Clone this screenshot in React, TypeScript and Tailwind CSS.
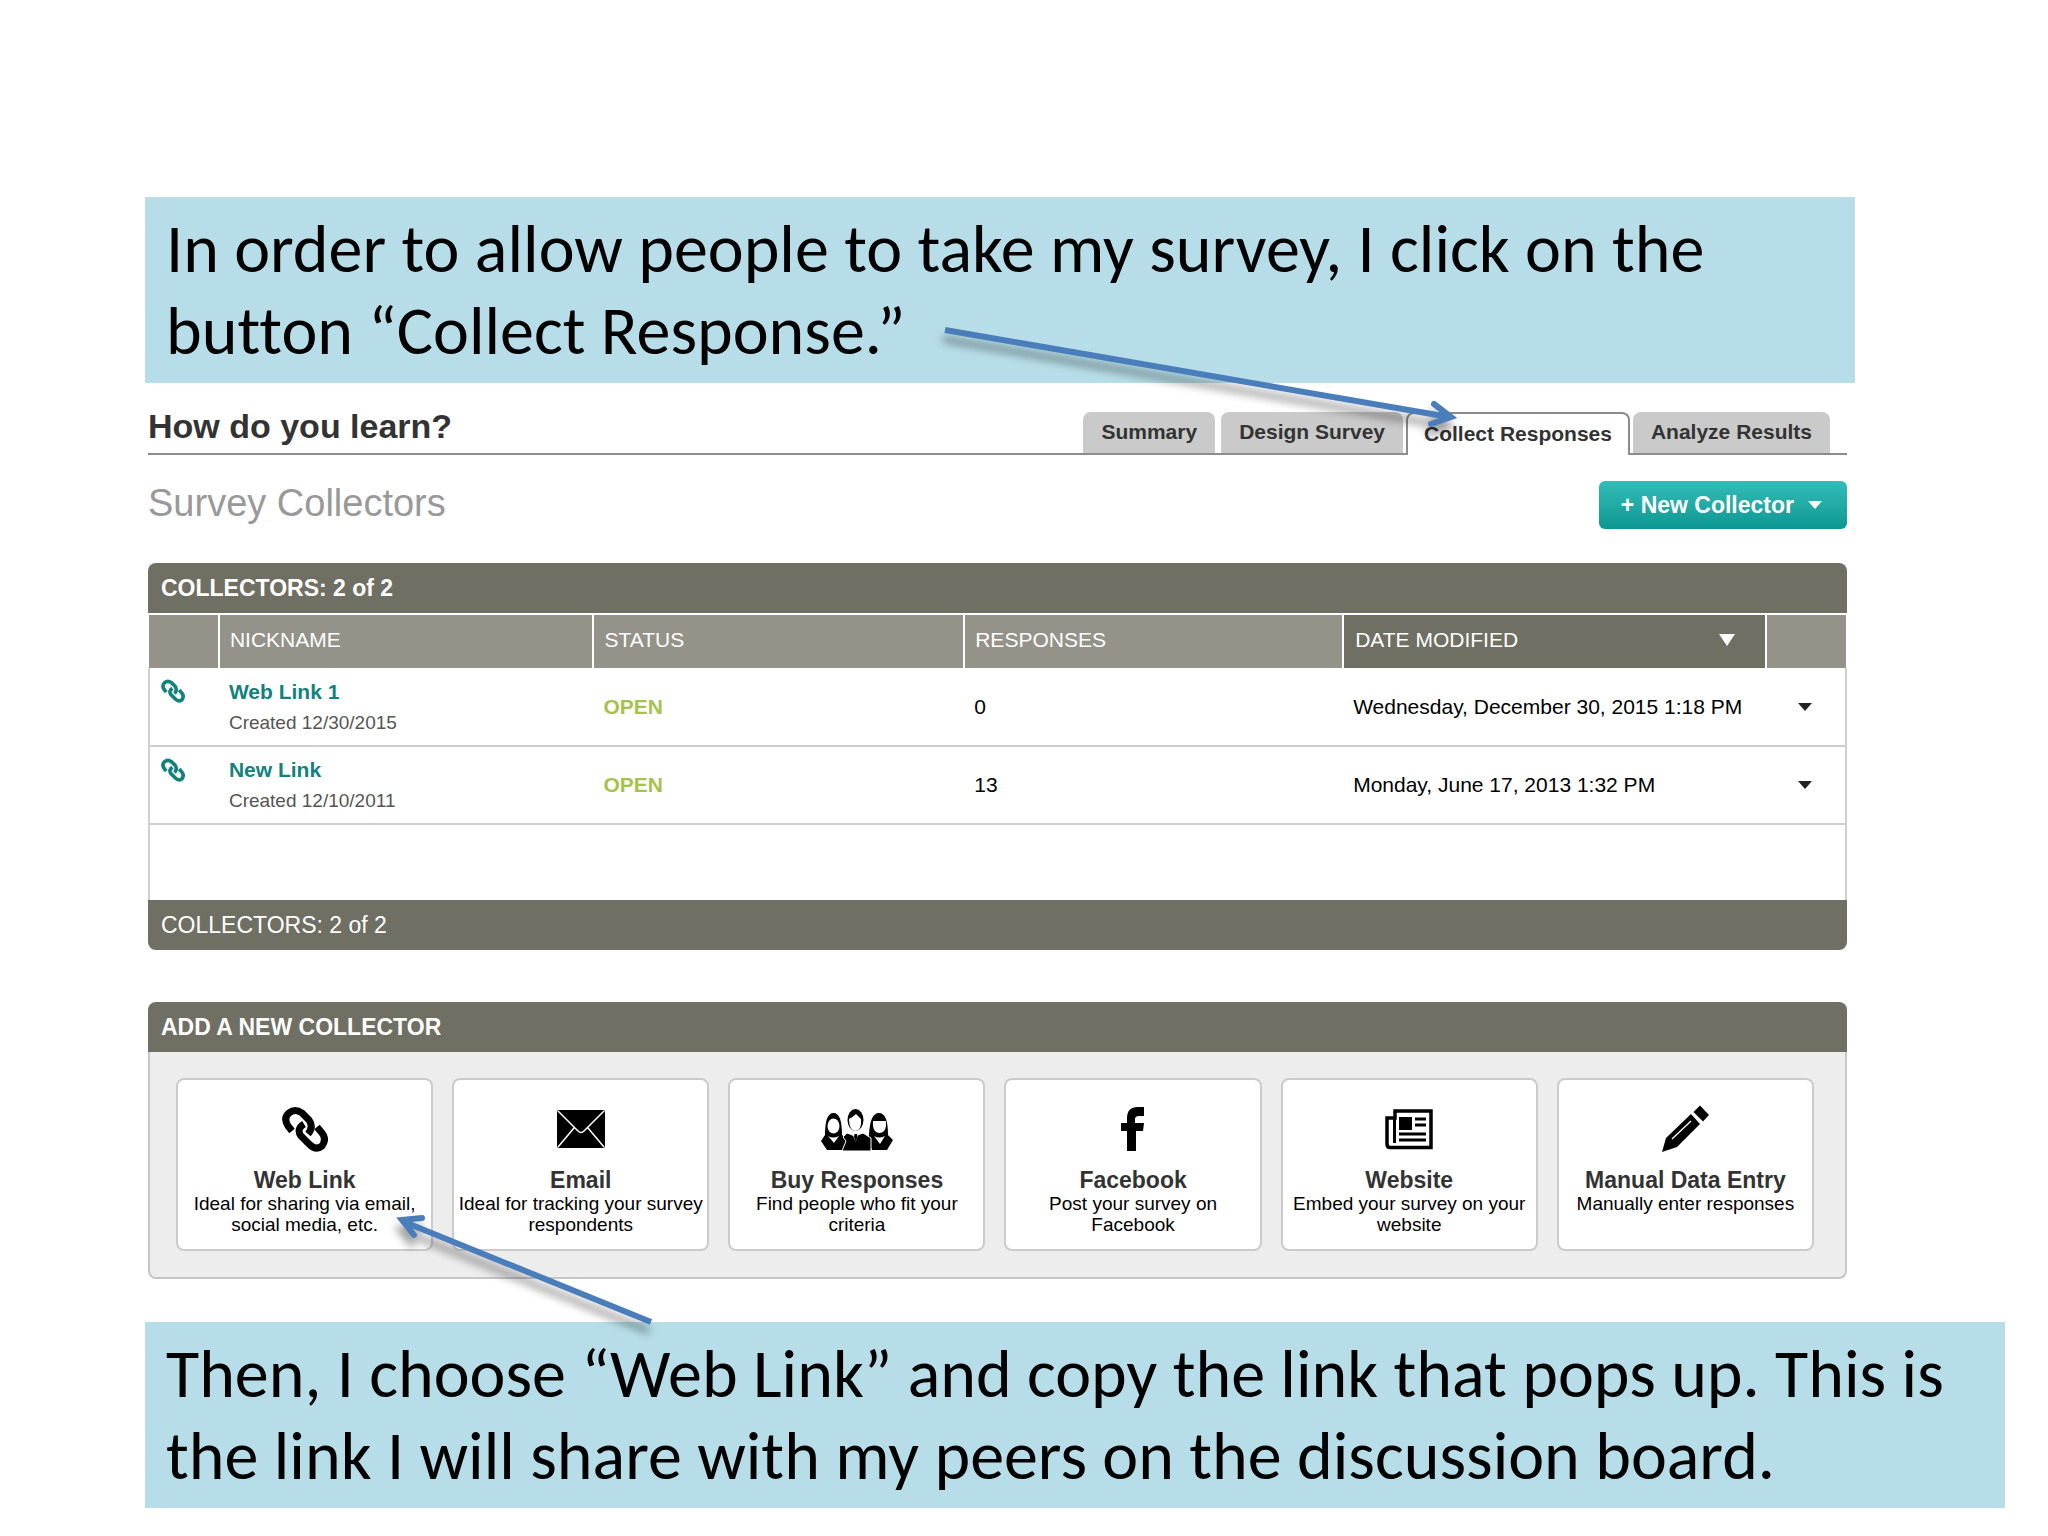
import type { ReactNode } from 'react'

const tabs = [
  { label: 'Summary', active: false },
  { label: 'Design Survey', active: false },
  { label: 'Collect Responses', active: true },
  { label: 'Analyze Results', active: false },
]

const collectors = [
  {
    name: 'Web Link 1',
    created: 'Created 12/30/2015',
    status: 'OPEN',
    responses: 0,
    modified: 'Wednesday, December 30, 2015 1:18 PM',
  },
  {
    name: 'New Link',
    created: 'Created 12/10/2011',
    status: 'OPEN',
    responses: 13,
    modified: 'Monday, June 17, 2013 1:32 PM',
  },
]

function LinkIcon({ className }: { className: string }) {
  return (
    <svg viewBox="11 10 46 46" className={className} fill="none" stroke="currentColor" strokeWidth="7">
      <path d="M21 35 L17 30 Q12 22 18 17 Q24 12 31 17 L38 24 Q43 31 37 38" />
      <path d="M33 28 Q25 33 30 40 L38 48 Q45 55 51 50 Q56 43 51 37 L46 31" />
    </svg>
  )
}

function EmailIcon() {
  return (
    <svg viewBox="0 0 48 38" className="w-12 h-[38px]">
      <rect width="48" height="38" rx="2" />
      <path
        d="M1 1 L21 21 Q24 24 27 21 L47 1 M1 37 L17 18 M47 37 L31 18"
        fill="none"
        stroke="#fff"
        strokeWidth="1.5"
      />
    </svg>
  )
}

function PeopleIcon() {
  return (
    <svg viewBox="6 10 72 41" className="w-[72px] h-[45px]">
      {/* left woman */}
      <path d="M10 36 Q10 14 18.500 14 Q27 14 27 36 L33 41 L29 51 L12 51 L6 42 Z" />
      <ellipse cx="18.500" cy="27" rx="6" ry="7.500" fill="#fff" />
      <path d="M13 37 Q18 40 24 37 L19 44 Z" fill="#fff" />
      {/* right woman */}
      <path d="M54 36 Q55 14 64 14 Q73 14 73 36 L78 41 L72 51 L57 51 L53 42 Z" />
      <path d="M58 22 H71 V27 Q70 34 64.500 34 Q59 34 58 27 Z" fill="#fff" />
      <path d="M59 37 Q64 40 70 37 L65 45 Z" fill="#fff" />
      {/* man */}
      <path d="M32 34 L40 37 L48 34 L56 39 V52 H27 L31 42 L28 38 Z" stroke="#fff" />
      <ellipse cx="40.500" cy="21" rx="8" ry="11" />
      <path d="M34 20 Q38 18 41 15 L46 20 Q47 31 40.500 32 Q34 31 34 20 Z" fill="#fff" />
      <path d="M37 34 L40.500 43 L44 34 L41 35 Z" fill="#fff" />
      <path d="M39.500 35 H42 L42.500 38 L40.500 43 L39 38 Z" />
    </svg>
  )
}

function FacebookIcon() {
  return (
    <svg viewBox="0 0 24 44" className="w-6 h-11">
      <path d="M23 0 V9 H18 Q14 9 14 12 V16 H23 L22 24 H15 V44 H6 V24 H0 V16 H6 V11 Q6 0 17 0 Z" />
    </svg>
  )
}

function NewsIcon() {
  return (
    <svg viewBox="15 12 48 41" className="w-12 h-[41px]" fill="none" stroke="currentColor">
      <path d="M25 14 H61 V50.500 H20 Q17 50.500 17 47 V21 H25 Z" strokeWidth="3.500" />
      <path d="M24.500 20 V46" strokeWidth="3" />
      <rect x="29" y="20" width="13" height="13" fill="currentColor" stroke="none" />
      <path d="M45 22 H56 M45 28 H56 M29 37 H56 M29 43 H56" strokeWidth="3" />
    </svg>
  )
}

function PencilIcon() {
  return (
    <svg viewBox="11 10 48 48" className="w-12 h-12">
      <path d="M41 19 L50 29 L27 52 L12 57 L16 43 Z" />
      <path d="M43.500 17 L50 10.500 L59 20 L53 26.500 Z" />
      <path d="M22 44 L41 26" stroke="#fff" strokeWidth="1.300" />
    </svg>
  )
}

const options: { title: string; text: string; icon: ReactNode }[] = [
  {
    title: 'Web Link',
    text: 'Ideal for sharing via email, social media, etc.',
    icon: <LinkIcon className="w-[46px] h-[50px]" />,
  },
  { title: 'Email', text: 'Ideal for tracking your survey respondents', icon: <EmailIcon /> },
  { title: 'Buy Responses', text: 'Find people who fit your criteria', icon: <PeopleIcon /> },
  { title: 'Facebook', text: 'Post your survey on Facebook', icon: <FacebookIcon /> },
  { title: 'Website', text: 'Embed your survey on your website', icon: <NewsIcon /> },
  { title: 'Manual Data Entry', text: 'Manually enter responses', icon: <PencilIcon /> },
]

function Note({ className, children }: { className: string; children: ReactNode }) {
  return (
    <p
      className={`${className} bg-[#b7dee8] px-[21px] py-[11px] font-[Carlito,Calibri,Lato,sans-serif] text-[68px] leading-[82px] text-black [font-variant-ligatures:none]`}
    >
      {children}
    </p>
  )
}

/* Callout arrows drawn over the page */
function Arrows() {
  return (
    <svg
      className="absolute left-0 top-0 w-[2048px] h-[1536px] pointer-events-none drop-shadow-[-2px_9px_4px_rgba(0,0,0,0.4)]"
      viewBox="0 0 2048 1536"
      fill="none"
      stroke="#4a7ebb"
      strokeWidth="6"
    >
      <path d="M945 330 L1449 417" />
      <path d="M1434 404 L1451 417 L1431 424" strokeLinecap="round" />
      <path d="M651 1322 L402 1221" />
      <path d="M422 1218 L402 1220 L414 1235" strokeLinecap="round" />
    </svg>
  )
}

export default function App() {
  return (
    <div className="relative min-h-screen overflow-hidden bg-white pt-[197px] pb-7 font-['Liberation_Sans',Arial,sans-serif] text-[#333]">
      <Note className="ml-[145px] mr-[193px]">
        In order to allow people to take my survey, I click on the
        <br />
        button “Collect Response.”
      </Note>

      <main className="ml-[148px] mr-[201px]">
        <header className="mt-[29px] flex items-end justify-between">
          <div className="flex h-[43px] flex-1 items-start border-b-2 border-[#8c8c8c]">
            <h1 className="text-[34px] leading-[28px] font-bold">How do you learn?</h1>
          </div>
          <nav className="flex items-end">
            {tabs.map((tab) =>
              tab.active ? (
                <a
                  key={tab.label}
                  href="#collect"
                  aria-current="page"
                  className="h-[43px] rounded-t-lg border-2 border-b-0 border-[#8c8c8c] px-4 text-[21px] leading-[40px] font-bold"
                >
                  {tab.label}
                </a>
              ) : (
                <div key={tab.label} className="border-b-2 border-[#8c8c8c] px-[3px]">
                  <a
                    href="#tab"
                    className="block h-[41px] rounded-t-lg bg-[#cacaca] px-[18px] text-[21px] leading-[40px] font-bold"
                  >
                    {tab.label}
                  </a>
                </div>
              ),
            )}
            <div className="w-3.5 border-b-2 border-[#8c8c8c]" />
          </nav>
        </header>

        <div className="mt-[26px] flex items-start justify-between">
          <h2 className="text-[38px] leading-[44px] text-[#999]">Survey Collectors</h2>
          <button
            type="button"
            className="flex h-12 items-center gap-3.5 rounded-md bg-linear-to-b from-[#33bdb8] to-[#0a9792] pl-[22px] pr-[25px] text-[23px] font-bold text-white"
          >
            + New Collector
            <svg viewBox="0 0 14 8" className="w-3.5 h-2" fill="currentColor">
              <path d="M0 0 H14 L7 8 Z" />
            </svg>
          </button>
        </div>

        <section className="mt-[34px] overflow-hidden rounded-lg">
          <h3 className="bg-[#6f6f63] px-[13px] text-[23px] leading-[50px] font-bold text-white">
            COLLECTORS: 2 of 2
          </h3>
          <table className="w-full table-fixed border-collapse text-left text-[21px]">
            <colgroup>
              <col className="w-[4.12%]" />
              <col className="w-[22.07%]" />
              <col className="w-[21.85%]" />
              <col className="w-[22.33%]" />
              <col className="w-[24.91%]" />
              <col />
            </colgroup>
            <thead className="border-t-2 border-white bg-[#949289] text-white">
              <tr className="h-[54px]">
                <th aria-label="Type" className="border-r-2 border-white" />
                <th className="border-r-2 border-white px-2.5 pb-1 font-normal">NICKNAME</th>
                <th className="border-r-2 border-white px-2.5 pb-1 font-normal">STATUS</th>
                <th className="border-r-2 border-white px-2.5 pb-1 font-normal">RESPONSES</th>
                <th className="border-r-2 border-white bg-[#6f6f63] px-[11px] pb-1 font-normal">
                  <button type="button" className="flex w-full items-center justify-between pr-[19px]">
                    DATE MODIFIED
                    <svg viewBox="0 0 16 12" className="w-4 h-3" fill="currentColor">
                      <path d="M0 0 H16 L8 12 Z" />
                    </svg>
                  </button>
                </th>
                <th aria-label="Actions" />
              </tr>
            </thead>
            <tbody className="border-x-2 border-[#d0cfd0] text-black">
              {collectors.map((row) => (
                <tr key={row.name} className="h-[78px] border-b-2 border-[#d0cfd0]">
                  <td className="pt-[11px] pl-[11px] align-top text-[#12827c]">
                    <LinkIcon className="w-6 h-6" />
                  </td>
                  <td className="px-2.5">
                    <a href="#collector" className="block leading-[31px] font-bold text-[#12827c]">
                      {row.name}
                    </a>
                    <span className="block text-[19px] leading-[31px] text-[#555]">{row.created}</span>
                  </td>
                  <td className="px-2.5 font-bold text-[#a6c24d]">{row.status}</td>
                  <td className="px-2.5">{row.responses}</td>
                  <td className="px-2.5 whitespace-nowrap">{row.modified}</td>
                  <td>
                    <button type="button" aria-label={`Options for ${row.name}`} className="ml-8 block">
                      <svg viewBox="0 0 14 8" className="w-3.5 h-2" fill="#222">
                        <path d="M0 0 H14 L7 8 Z" />
                      </svg>
                    </button>
                  </td>
                </tr>
              ))}
            </tbody>
          </table>
          <div className="h-[75px] border-x-2 border-[#d0cfd0]" />
          <p className="bg-[#6f6f63] px-[13px] text-[23px] leading-[50px] text-white">COLLECTORS: 2 of 2</p>
        </section>

        <section className="mt-[52px]">
          <h3 className="rounded-t-lg bg-[#6f6f63] px-[13px] text-[23px] leading-[50px] font-bold text-white">
            ADD A NEW COLLECTOR
          </h3>
          <div className="grid grid-cols-6 gap-[19px] rounded-b-lg border-2 border-t-0 border-[#c6c6c6] bg-[#eeedee] pt-[26px] pr-[31px] pb-[26px] pl-[26px]">
            {options.map((option) => (
              <button
                key={option.title}
                type="button"
                className="flex h-[173px] flex-col items-center rounded-lg border-2 border-[#cbcbcb] bg-white text-[19px] leading-[21px] text-black"
              >
                <span className="mt-[19px] flex h-[60px] items-center">{option.icon}</span>
                <span className="mt-2 text-[23px] leading-[26px] font-bold text-[#333]">{option.title}</span>
                <span className="px-[3px]">{option.text}</span>
              </button>
            ))}
          </div>
        </section>
      </main>

      <Note className="mt-[43px] ml-[145px] mr-[43px]">
        Then, I choose “Web Link” and copy the link that pops up. This is
        <br />
        the link I will share with my peers on the discussion board.
      </Note>

      <Arrows />
    </div>
  )
}
